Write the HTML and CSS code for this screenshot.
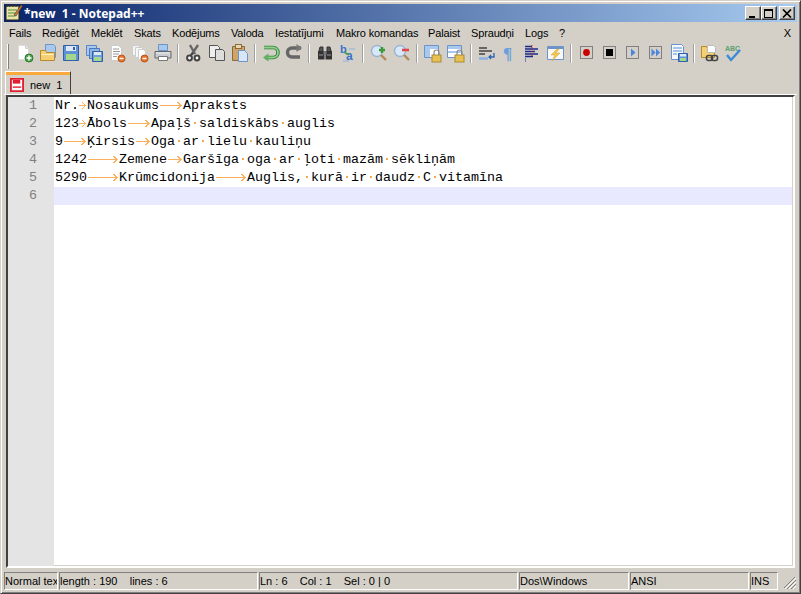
FILE: index.html
```html
<!DOCTYPE html>
<html lang="lv">
<head>
<meta charset="utf-8">
<title>*new 1 - Notepad++</title>
<link rel="stylesheet" href="styles.css">
</head>
<body>
<div class="window">
  <header class="titlebar">
    <svg class="appicon" width="18" height="18" viewBox="0 0 18 18"><rect x="1" y="3" width="13" height="14" fill="#e8e6a8" stroke="#222"/><path d="M3 7h9M3 10h9M3 13h7" stroke="#5a8a3a"/><path d="M2 1v3M5 1v3M8 1v3M11 1v3" stroke="#333"/><path d="M9 12L16 2l1.500 1L11 13z" fill="#d9802a" stroke="#333" stroke-width=".6"/></svg>
    <span class="title">*new&nbsp; 1 - Notepad++</span>
    <div class="winbtns">
      <button class="winbtn"><span class="g-min"></span></button>
      <button class="winbtn"><span class="g-max"></span></button>
      <button class="winbtn closebtn"><svg width="10" height="9" viewBox="0 0 10 9"><path d="M1 0.500L9 8.500M9 0.500L1 8.500" stroke="#000" stroke-width="1.700"/></svg></button>
    </div>
  </header>
  <nav class="menubar">
    <span class="m m1">Fails</span><span class="m m2">Rediģēt</span><span class="m m3">Meklēt</span><span class="m m4">Skats</span><span class="m m5">Kodējums</span><span class="m m6">Valoda</span><span class="m m7">Iestatījumi</span><span class="m m8">Makro komandas</span><span class="m m9">Palaist</span><span class="m m10">Spraudņi</span><span class="m m11">Logs</span><span class="m m12">?</span>
    <span class="m mx">X</span>
  </nav>
  <div class="toolbar">
    <span class="grip"></span>
    <span class="b"><svg viewBox="0 0 20 20"><path d="M3.500 2.500h7l3 3v11h-10z" fill="#fff" stroke="#ddd"/><path d="M10.500 2.500v3h3" fill="#e8e8e8" stroke="#ccc"/><circle cx="14" cy="15" r="4" fill="#4ea24e" stroke="#2d7a2d"/><path d="M14 12.500v5M11.500 15h5" stroke="#fff" stroke-width="1.400"/></svg></span>
    <span class="b"><svg viewBox="0 0 20 20"><path d="M7.500 1.500h8l2 2v11h-10z" fill="#a9c8ee" stroke="#6c94c8"/><path d="M2.500 7.500h5l1 2h8v8h-14z" fill="#f6cf72" stroke="#b98a2a"/><path d="M3.500 11.500h12" stroke="#fff2c4"/></svg></span>
    <span class="b"><svg viewBox="0 0 20 20"><path d="M2.500 2.500h15v15h-15z" fill="#5f91d6" stroke="#2e5fa8"/><rect x="5" y="3" width="10" height="5" fill="#dfe9f6"/><rect x="5" y="11" width="10" height="6" fill="#a4d68c"/><rect x="12" y="4" width="2" height="3" fill="#2e5fa8"/></svg></span>
    <span class="b"><svg viewBox="0 0 20 20"><path d="M2.500 2.500h10v10h-10z" fill="#a9c8ee" stroke="#5b86c4"/><path d="M5.500 5.500h10v10h-10z" fill="#8fb4e6" stroke="#4a78bc"/><path d="M8.500 8.500h10v10h-10z" fill="#6f9ee0" stroke="#2e5fa8"/><rect x="10" y="9" width="7" height="3" fill="#dfe9f6"/><rect x="10" y="14" width="7" height="4" fill="#a4d68c"/></svg></span>
    <span class="b"><svg viewBox="0 0 20 20"><path d="M4.500 2.500h7l3 3v12h-10z" fill="#fff" stroke="#ccc"/><path d="M6 6h6M6 8.500h7M6 11h6M6 13.500h4" stroke="#999"/><circle cx="14.500" cy="15.500" r="3.500" fill="#e8752a" stroke="#b5521a"/><path d="M12.500 15.500h4" stroke="#fff" stroke-width="1.400"/></svg></span>
    <span class="b"><svg viewBox="0 0 20 20"><path d="M2.500 2.500h6l2 2v8h-8z" fill="#f4f4f4" stroke="#ccc"/><path d="M5.500 4.500h6l2 2v8h-8z" fill="#f8f8f8" stroke="#ccc"/><path d="M8.500 6.500h5l2 2v8h-7z" fill="#fff" stroke="#ccc"/><circle cx="14.500" cy="15.500" r="3.500" fill="#e8752a" stroke="#b5521a"/><path d="M12.500 15.500h4" stroke="#fff" stroke-width="1.400"/></svg></span>
    <span class="b"><svg viewBox="0 0 20 20"><path d="M5.500 1.500h9v6h-9z" fill="#a9c8ee" stroke="#6c94c8"/><path d="M2 8.500h16v6.500H2z" fill="#c9ccd2" stroke="#666"/><path d="M5.500 13.500h9v4h-9z" fill="#fff" stroke="#777"/><path d="M3 10h14" stroke="#eee"/></svg></span>
    <span class="sep"></span>
    <span class="b"><svg viewBox="0 0 20 20"><path d="M14 2L8 11M6 2l5 9" stroke="#666" stroke-width="2.400"/><path d="M9 10l-3 3" stroke="#444" stroke-width="2"/><circle cx="5.500" cy="15" r="2.400" fill="#fff" stroke="#444" stroke-width="2"/><circle cx="13" cy="15" r="2.400" fill="#fff" stroke="#444" stroke-width="2"/></svg></span>
    <span class="b"><svg viewBox="0 0 20 20"><path d="M2.500 2.500h8l2 2v10h-10z" fill="#eee" stroke="#555"/><path d="M8.500 6.500h7l2 2v9h-9z" fill="#ddd" stroke="#555"/></svg></span>
    <span class="b"><svg viewBox="0 0 20 20"><path d="M2.500 3.500h12v14h-12z" fill="#cfa468" stroke="#8a6a3a"/><rect x="5.500" y="1.500" width="6" height="4" fill="#e8d8b0" stroke="#8a6a3a"/><path d="M8.500 7.500h6l3 3v8h-9z" fill="#d8e6f8" stroke="#6c94c8"/></svg></span>
    <span class="sep"></span>
    <span class="b"><svg viewBox="0 0 20 20"><path d="M3 4.500h9a4.500 4.500 0 0 1 0 10H4" fill="none" stroke="#2f7f3a" stroke-width="3.600"/><path d="M3 4.500h9a4.500 4.500 0 0 1 0 10H4" fill="none" stroke="#8fd08a" stroke-width="1.800"/><path d="M7.500 10.500L2 14.500l5.500 4z" fill="#62b062"/></svg></span>
    <span class="b"><svg viewBox="0 0 20 20"><path d="M17 5.500H8a4.500 4.500 0 0 0 0 9h8" fill="none" stroke="#666" stroke-width="3.400" transform="translate(0 -.5)"/><path d="M12.500 1L18 5l-5.500 4z" fill="#777"/></svg></span>
    <span class="sep"></span>
    <span class="b"><svg viewBox="0 0 20 20"><path d="M4 8l1-4h3v4M16 8l-1-4h-3v4" fill="#555" stroke="#333"/><rect x="3" y="8" width="6.500" height="8.500" fill="#333"/><rect x="10.500" y="8" width="6.500" height="8.500" fill="#333"/><rect x="8.500" y="8" width="3" height="4" fill="#777"/><path d="M4 12h4M12 12h4" stroke="#999"/></svg></span>
    <span class="b"><svg viewBox="0 0 20 20"><text x="2" y="10" class="rl">b</text><text x="8" y="17" class="rl2">a</text><path d="M6 9l5 3" stroke="#4a9a5a" stroke-width="2"/><path d="M11 6h6M11 18H5" stroke="#8ab0e0"/></svg></span>
    <span class="sep"></span>
    <span class="b"><svg viewBox="0 0 20 20"><circle cx="8" cy="8" r="5.500" fill="#d8e8f8" stroke="#9ab4d0" stroke-width="1.400"/><path d="M12 12l5 5" stroke="#b08a5a" stroke-width="2.400"/><path d="M13 4v6M10 7h6" stroke="#3a9a3a" stroke-width="2.400"/></svg></span>
    <span class="b"><svg viewBox="0 0 20 20"><circle cx="8" cy="8" r="5.500" fill="#d8e8f8" stroke="#9ab4d0" stroke-width="1.400"/><path d="M12 12l5 5" stroke="#b08a5a" stroke-width="2.400"/><path d="M10 7h7" stroke="#e04848" stroke-width="2.600"/></svg></span>
    <span class="sep"></span>
    <span class="b"><svg viewBox="0 0 20 20"><path d="M1.500 2.500h14v12h-14z" fill="#fff" stroke="#6c94c8"/><path d="M2 3h13v3H2zM2 6h5v8H2z" fill="#a9c8ee"/><rect x="9" y="12" width="9" height="7" fill="#e8c050" stroke="#a88a3a"/><path d="M11 12V9.500a2.500 2.500 0 0 1 5 0V12" fill="none" stroke="#888" stroke-width="1.200"/></svg></span>
    <span class="b"><svg viewBox="0 0 20 20"><path d="M1.500 2.500h14v12h-14z" fill="#fff" stroke="#6c94c8"/><path d="M2 3h13v3H2zM2 8h13v2H2z" fill="#a9c8ee"/><rect x="9" y="12" width="9" height="7" fill="#e8c050" stroke="#a88a3a"/><path d="M11 12V9.500a2.500 2.500 0 0 1 5 0V12" fill="none" stroke="#888" stroke-width="1.200"/></svg></span>
    <span class="sep"></span>
    <span class="b"><svg viewBox="0 0 20 20"><path d="M2 5h8M2 8h13M2 11h6" stroke="#444" stroke-width="1.300"/><path d="M2 15.500h9" stroke="#8ab0e0" stroke-width="2.500"/><path d="M17 10v4h-5M14 12l-2 2 2 2" fill="none" stroke="#2a62b8" stroke-width="1.300"/></svg></span>
    <span class="b"><svg viewBox="0 0 20 20"><text x="3" y="16" class="pilcrow">¶</text></svg></span>
    <span class="b"><svg viewBox="0 0 20 20"><path d="M2 3.500h7M2 6h13M2 8.500h10M2 11h13M2 13.500h8" stroke="#1a2a88" stroke-width="1.500"/><path d="M9 2v11" stroke="#d02020" stroke-dasharray="1 1"/><path d="M2 16h1M2 18h1" stroke="#1a2a88"/></svg></span>
    <span class="b"><svg viewBox="0 0 20 20"><path d="M1.500 3.500h16v13h-16z" fill="#f8f8f8" stroke="#6c94c8"/><path d="M2 4h15v2H2z" fill="#6c94c8"/><path d="M11 6L5 12h4l-3 6 8-8h-4l3-4z" fill="#f0c850" stroke="#d0a030" stroke-width=".5"/></svg></span>
    <span class="sep"></span>
    <span class="b"><svg viewBox="0 0 20 20"><rect class="mbox" x="3.500" y="3.500" width="12" height="12"/><circle cx="9.500" cy="9.500" r="3.400" fill="#c80000"/></svg></span>
    <span class="b"><svg viewBox="0 0 20 20"><rect class="mbox" x="3.500" y="3.500" width="12" height="12"/><rect x="6" y="6" width="7" height="7" fill="#000"/></svg></span>
    <span class="b"><svg viewBox="0 0 20 20"><rect class="mbox" x="3.500" y="3.500" width="12" height="12"/><path d="M8 5.500l4.500 4-4.500 4z" fill="#4a86e0"/></svg></span>
    <span class="b"><svg viewBox="0 0 20 20"><rect class="mbox" x="3.500" y="3.500" width="12" height="12"/><path d="M5.500 5.500l4 4-4 4zM10 5.500l4 4-4 4z" fill="#4a86e0"/></svg></span>
    <span class="b"><svg viewBox="0 0 20 20"><path d="M2.500 1.500h10l2 2v13h-12z" fill="#f4f8fc" stroke="#6c94c8"/><path d="M4 5h9M4 8h9M4 11h4" stroke="#5b8fd8"/><path d="M9.500 10.500h9v8h-9z" fill="#5f91d6" stroke="#2e5fa8"/><rect x="11" y="11" width="6" height="2.500" fill="#dfe9f6"/><rect x="11" y="15" width="6" height="3" fill="#a4d68c"/></svg></span>
    <span class="sep"></span>
    <span class="b"><svg viewBox="0 0 20 20"><path d="M1.500 3.500h5l1 2h7v9h-13z" fill="#f6cf72" stroke="#b98a2a"/><path d="M7.500 2.500h6l2 2v5h-8z" fill="#fff" stroke="#bbb"/><rect x="6.500" y="12.500" width="6" height="5" rx="2" fill="none" stroke="#444" stroke-width="1.600"/><rect x="11.500" y="12.500" width="6" height="5" rx="2" fill="none" stroke="#444" stroke-width="1.600"/></svg></span>
    <span class="b"><svg viewBox="0 0 20 20"><text x="2" y="8" class="abc">ABC</text><path d="M4 12l4 5 9-10" fill="none" stroke="#3a8ad8" stroke-width="2.400"/></svg></span>
  </div>
  <div class="tabbar">
    <div class="tab">
      <span class="tabtop"></span>
      <span class="tabbody">
        <svg class="tabicon" width="14" height="14" viewBox="0 0 15 15"><path d="M1 1h13v13H1z" fill="#fff" stroke="#e02030" stroke-width="2"/><rect x="3" y="2" width="8" height="4" fill="#e02030"/><rect x="3" y="9" width="9" height="1.500" fill="#e02030"/></svg>
        <span class="tablabel">new&nbsp; 1</span>
      </span>
    </div>
  </div>
  <main class="editor">
    <div class="gutter">
      <div>1</div><div>2</div><div>3</div><div>4</div><div>5</div><div>6</div>
    </div>
    <div class="code">
      <div class="line">Nr.<svg class="t t1" viewBox="0 0 8 9"><path d="M0 4.500h6.500M3 1l3.500 3.500L3 8"/></svg>Nosaukums<svg class="t t3" viewBox="0 0 24 9"><path d="M1 4.500h21M18.500 1l3.500 3.500L18.500 8"/></svg>Apraksts</div>
      <div class="line">123<svg class="t t1" viewBox="0 0 8 9"><path d="M0 4.500h6.500M3 1l3.500 3.500L3 8"/></svg>Ābols<svg class="t t3" viewBox="0 0 24 9"><path d="M1 4.500h21M18.500 1l3.500 3.500L18.500 8"/></svg>Apaļš<i> </i>saldiskābs<i> </i>auglis</div>
      <div class="line">9<svg class="t t3" viewBox="0 0 24 9"><path d="M1 4.500h21M18.500 1l3.500 3.500L18.500 8"/></svg>Ķirsis<svg class="t t2" viewBox="0 0 16 9"><path d="M1 4.500h13M10.500 1L14 4.500 10.500 8"/></svg>Oga<i> </i>ar<i> </i>lielu<i> </i>kauliņu</div>
      <div class="line">1242<svg class="t t4" viewBox="0 0 32 9"><path d="M1 4.500h29M26.500 1L30 4.500 26.500 8"/></svg>Zemene<svg class="t t2" viewBox="0 0 16 9"><path d="M1 4.500h13M10.500 1L14 4.500 10.500 8"/></svg>Garšīga<i> </i>oga<i> </i>ar<i> </i>ļoti<i> </i>mazām<i> </i>sēkliņām</div>
      <div class="line">5290<svg class="t t4" viewBox="0 0 32 9"><path d="M1 4.500h29M26.500 1L30 4.500 26.500 8"/></svg>Krūmcidonija<svg class="t t4" viewBox="0 0 32 9"><path d="M1 4.500h29M26.500 1L30 4.500 26.500 8"/></svg>Auglis,<i> </i>kurā<i> </i>ir<i> </i>daudz<i> </i>C<i> </i>vitamīna</div>
      <div class="line current"></div>
    </div>
  </main>
  <footer class="statusbar">
    <span class="p p1">Normal text file</span>
    <span class="p p2">length : 190&nbsp;&nbsp;&nbsp;&nbsp;lines : 6</span>
    <span class="p p3">Ln : 6&nbsp;&nbsp;&nbsp;&nbsp;Col : 1&nbsp;&nbsp;&nbsp;&nbsp;Sel : 0 | 0</span>
    <span class="p p4">Dos\Windows</span>
    <span class="p p5">ANSI</span>
    <span class="p p6">INS</span>
    <svg class="sizegrip" width="16" height="16" viewBox="0 0 16 16"><path d="M14 3L3 14M15 6L6 15M15 10l-5 5" stroke="#808080" stroke-width="1"/><path d="M15 4L4 15M15 8l-7 7M15 12l-3 3" stroke="#fff" stroke-width="1"/></svg>
  </footer>
</div>
</body>
</html>
```
FILE: styles.css
```css
* { box-sizing: border-box; }
html, body { margin: 0; padding: 0; }
body { width: 801px; height: 594px; overflow: hidden; background: #d4d0c8; }
.window {
  width: 801px; height: 594px; padding: 3px 3px 1px;
  display: flex; flex-direction: column;
  background: #d4d0c8;
  border: 1px solid; border-color: #d4d0c8 #404040 #404040 #d4d0c8;
  box-shadow: inset 1px 1px 0 #fff, inset -1px -1px 0 #808080;
  font-family: "Liberation Sans", sans-serif;
}
.titlebar {
  height: 18px; flex: none; display: flex; align-items: center; padding: 0 2px 0 1px;
  background: linear-gradient(90deg, #0a246a, #a6caf0);
}
.appicon { flex: none; margin-top: -2px; }
.title { color: #fff; font: bold 12px "Noto Sans", sans-serif; margin-left: 1px; }
.winbtns { margin-left: auto; display: flex; }
.winbtn {
  width: 16px; height: 14px; padding: 0; margin: 0; background: #d4d0c8;
  border: 1px solid; border-color: #fff #404040 #404040 #fff;
  box-shadow: inset -1px -1px 0 #808080;
  display: flex; align-items: center; justify-content: center;
}
.closebtn { margin-left: 2px; }
.g-min { width: 6px; height: 2px; background: #000; margin-top: 7px; margin-right: 2px; }
.g-max { width: 9px; height: 9px; border: 1px solid #000; border-top-width: 2px; margin-right: 1px; }
.menubar {
  height: 20px; flex: none; display: flex; align-items: center; padding: 1px 0 0 5px;
  font-size: 11px; letter-spacing: -.15px; color: #000; white-space: nowrap;
}
.m { display: block; flex: none; }
.m1 { width: 33px; } .m2 { width: 49px; } .m3 { width: 43px; } .m4 { width: 38px; }
.m5 { width: 59px; } .m6 { width: 44px; } .m7 { width: 61px; } .m8 { width: 92px; }
.m9 { width: 43px; } .m10 { width: 54px; } .m11 { width: 34px; } .m12 { width: 20px; }
.mx { margin-left: auto; margin-right: 6px; }
.toolbar { height: 28px; flex: none; display: flex; align-items: flex-start; padding: 1px 0 0 3px; }
.grip { width: 2px; height: 25px; margin-top: 1px; margin-right: 4px; background: #fff; border-right: 1px solid #808080; }
.b { width: 23px; height: 20px; flex: none; display: flex; align-items: center; justify-content: center; }
.b svg { width: 20px; height: 20px; display: block; }
.sep { width: 2px; height: 19px; margin: 1px 3px 0; flex: none; background: #a0a0a0; border-right: 1px solid #fff; }
.rl { font: bold 11px "Liberation Sans", sans-serif; fill: #3a72c8; }
.rl2 { font: bold 12px "Liberation Sans", sans-serif; fill: #3a72c8; }
.pilcrow { font: bold 17px "Liberation Serif", serif; fill: #6a9edc; }
.abc { font: bold 7px "Liberation Sans", sans-serif; fill: #5aa070; }
.mbox { fill: #d4d0c8; stroke: #808080; }
.tabbar { height: 25px; flex: none; padding-top: 1px; border-bottom: 1px solid #fff; }
.tab {
  width: 66px; height: 23px; display: flex; flex-direction: column; margin-left: 1px;
  border-right: 1px solid #404040; border-left: 1px solid #fff; border-top: 1px solid #fff;
}
.tabtop { height: 3px; flex: none; background: #faaa3c; }
.tabbody { display: flex; align-items: center; padding: 0 0 0 4px; height: 19px; font-size: 11px; color: #000; }
.tabicon { flex: none; margin-right: 6px; }
.editor {
  flex: none; height: 473px; display: flex; background: #fff;
  border: 2px solid; border-color: #404040 #fff #fff #404040; box-shadow: inset -1px -1px 0 #d4d0c8;
  font: 13.33px/18px "Liberation Mono", monospace;
  margin: 0 2px 3px;
}
.gutter { width: 46px; flex: none; background: #e4e4e4; color: #808080; text-align: right; padding-right: 17px; }
.gutter div { height: 18px; }
.code { flex: 1; min-width: 0; padding-left: 1px; padding-right: 1px; color: #000; }
.line { height: 18px; white-space: pre; }
.current { background: #e8e8ff; margin-left: -1px; }
.line i {
  display: inline-block; width: 8px; height: 2px; vertical-align: 3px; white-space: normal; font-size: 0;
  background: linear-gradient(#f4a94e, #f4a94e) center / 2px 2px no-repeat;
}
.t { display: inline-block; height: 9px; vertical-align: -1px; fill: none; stroke: #fbb060; stroke-width: 1; shape-rendering: crispEdges; }
.t1 { width: 8px; } .t2 { width: 16px; } .t3 { width: 24px; } .t4 { width: 32px; }
.statusbar {
  flex: 1; display: flex; align-items: stretch; gap: 1px; font-size: 11px; color: #000;
  padding: 1px 0 3px 0; white-space: nowrap;
}
.p { display: block; overflow: hidden; border: 1px solid; border-color: #808080 #fff #fff #808080; line-height: 16px; flex: none; }
.p1 { width: 54px; } .p2 { width: 199px; } .p3 { width: 259px; } .p4 { width: 110px; } .p5 { width: 119px; } .p6 { width: 28px; }
.sizegrip { margin-left: auto; align-self: flex-end; }
```
